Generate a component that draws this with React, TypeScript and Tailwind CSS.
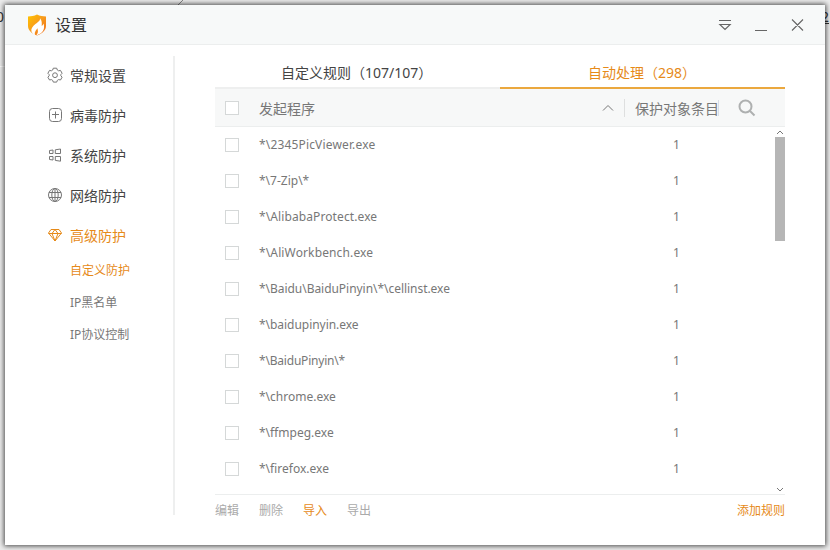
import React from 'react';

const rules = [
  { path: '*\\2345PicViewer.exe', tracking: 'tracking-[0.16px]' },
  { path: '*\\7-Zip\\*', tracking: 'tracking-[0px]' },
  { path: '*\\AlibabaProtect.exe', tracking: 'tracking-[0.1px]' },
  { path: '*\\AliWorkbench.exe', tracking: 'tracking-[0.13px]' },
  { path: '*\\Baidu\\BaiduPinyin\\*\\cellinst.exe', tracking: 'tracking-[-0.04px]' },
  { path: '*\\baidupinyin.exe', tracking: 'tracking-[-0.04px]' },
  { path: '*\\BaiduPinyin\\*', tracking: 'tracking-[-0.2px]' },
  { path: '*\\chrome.exe', tracking: 'tracking-[0px]' },
  { path: '*\\ffmpeg.exe', tracking: 'tracking-[0px]' },
  { path: '*\\firefox.exe', tracking: 'tracking-[0px]' },
];

function Logo() {
  return (
    <svg className="h-[22px] w-5" viewBox="0 0 20 22">
      <defs>
        <linearGradient id="shield" x1="0" y1="0" x2="1" y2="1">
          <stop offset="0" stopColor="#ffc400" />
          <stop offset="0.5" stopColor="#f79a1d" />
          <stop offset="1" stopColor="#ee6c1c" />
        </linearGradient>
      </defs>
      <path d="M10 .6C12.800 2 16 2.500 19 2.500V12c0 4-3.500 7.500-9 9.500C4.500 19.500 1 16 1 12V2.500C4 2.500 7.200 2 10 .6Z" fill="url(#shield)" />
      <path d="M13 4.200C13.300 7.500 9.500 8.600 6.500 11.700c-2.400 2.500-3 5.200-1 7.500.8.900 1.700 1.500 2.700 2-1.200-3 .8-5 2.300-7 .2 1.800.7 2.700.3 4.200-.3 1.100-.8 2-1.600 3 3.700-1.200 7-3.200 7.700-6.900.3-1.900.2-3.700-.5-5-.1 1.100-.8 2-1.700 2.500C14.800 9.300 15.200 6.700 13 4.200Z" fill="#fff" />
    </svg>
  );
}

function Gear() {
  return (
    <svg className="size-4" viewBox="0 0 16 16" fill="none" stroke="currentColor" strokeWidth="1">
      <path d="M6.300 1.200h3.400l.6 1.800 1.300.8 1.900-.4 1.600 2.900L13.800 7.700v1l1.300 1.500-1.600 2.800-1.900-.4-1.300.8-.6 1.700H6.300l-.6-1.700-1.300-.8-1.900.4-1.600-2.800 1.300-1.500v-1L.9 6.300l1.600-2.900 1.900.4L5.700 3Z" strokeLinejoin="round" />
      <circle cx="8" cy="8.200" r="2.400" />
    </svg>
  );
}

function PlusBox() {
  return (
    <svg className="size-4" viewBox="0 0 16 16" fill="none" stroke="currentColor" strokeWidth="1">
      <rect x="2.500" y="1.500" width="12" height="13" rx="3" />
      <path d="M8.500 4.500v7M5 7.500h7" />
    </svg>
  );
}

function WindowsMark() {
  return (
    <svg className="size-4" viewBox="0 0 16 16" fill="none" stroke="currentColor" strokeWidth="1">
      <path d="M2.500 3.500l3.500-.5v3.500h-3.500ZM8.300 2.800l5.200-.8v4.500H8.300ZM2.500 9.500h3.500v3.500l-3.500-.5ZM8.300 9.500h5.200v4.700l-5.200-.8Z" />
    </svg>
  );
}

function Globe() {
  return (
    <svg className="size-4" viewBox="0 0 16 16" fill="none" stroke="currentColor" strokeWidth="1">
      <circle cx="8" cy="8" r="6.500" />
      <ellipse cx="8" cy="8" rx="3.200" ry="6.500" />
      <path d="M8 1.500v13M2 5.500h12M2 10.500h12" />
    </svg>
  );
}

function Diamond() {
  return (
    <svg className="size-4" viewBox="0 0 16 16" fill="none" stroke="currentColor" strokeWidth="1" strokeLinejoin="round">
      <path d="M4 2.500h8L14.500 6 8 14 1.500 6ZM1.500 6.500h13M5 6.500l3 7.500 3-7.500M5 6.500l3-4 3 4" />
    </svg>
  );
}

const nav = [
  { label: '常规设置', icon: <Gear /> },
  { label: '病毒防护', icon: <PlusBox /> },
  { label: '系统防护', icon: <WindowsMark /> },
  { label: '网络防护', icon: <Globe /> },
];

function Checkbox() {
  return <span className="ml-2.5 size-3.5 shrink-0 border border-[#d5d8d8] bg-white" />;
}

export default function App() {
  return (
    <div className="relative h-[550px] w-[830px] overflow-hidden bg-[#ececec] p-[5px] font-['Noto_Sans','Noto_Sans_CJK_SC',sans-serif] text-[#444]">
      <span className="absolute -left-[4px] top-[6px] text-[14px] text-[#333]">0</span>
      <span className="absolute left-[821px] top-[6px] text-[14px] text-[#333] underline">2</span>
      <svg className="absolute left-[176px] top-0 h-[5px] w-2" viewBox="0 0 8 5" fill="none" stroke="#888"><path d="M2 5 7 0" /></svg>
      <span className="absolute left-0 top-[66px] h-px w-[5px] bg-white" />

      <div className="relative flex h-[540px] w-[820px] flex-col bg-white shadow-[0_0_5px_1px_rgba(0,0,0,0.7)]">
        <header className="flex h-10 shrink-0 items-center border-b border-[#eceeee] bg-[#f7f9f9] pl-[22px] pr-[21px]">
          <Logo />
          <h1 className="ml-2 mt-px flex-1 text-[16px] leading-6 text-[#333]">设置</h1>
          <svg className="h-4 w-[88px] text-[#666]" viewBox="0 0 88 16" fill="none" stroke="currentColor" strokeWidth="1.100">
            <path d="M3 3.500h12M3.800 7.500h10.400L9 12.500ZM39 13.500h12M76 2.500l11 11M87 2.500l-11 11" />
          </svg>
        </header>

        <div className="flex min-h-0 flex-1">
          <aside className="mb-[30px] mt-[11px] w-[170px] shrink-0 border-r-2 border-[#eeefef] pl-[42px]">
            <nav className="-mt-px text-[14px]">
              {nav.map((item) => (
                <div key={item.label} className="flex h-10 items-center gap-[7px] text-[#444]">
                  <span className="text-[#777]">{item.icon}</span>{item.label}
                </div>
              ))}
              <div className="flex h-10 items-center gap-[7px] text-[#e68a19]"><Diamond />高级防护</div>
            </nav>
            <div className="pl-[23px] text-[12px] leading-8 text-[#777]">
              <div className="text-[#e68a19]">自定义防护</div>
              <div>IP黑名单</div>
              <div>IP协议控制</div>
            </div>
          </aside>

          <main className="ml-10 mt-[11px] flex w-[570px] flex-col">
            <div className="flex h-[33px] text-[14px] leading-[34px]">
              <div className="w-[285px] border-b-2 border-[#eeefef] pl-[66px] text-[#444]">自定义规则（107/107）</div>
              <div className="w-[285px] border-b-2 border-[#eba83e] pl-[88px] text-[#e68a19]">自动处理（298）</div>
            </div>
            <div className="flex h-[38px] shrink-0 items-center border-b border-[#eceeee] bg-[#f7f8f8] text-[14px] text-[#777]">
              <Checkbox />
              <span className="ml-5 mt-px flex-1">发起程序</span>
              <svg className="mr-[10px] h-3 w-3" viewBox="0 0 12 12" fill="none" stroke="#777"><path d="m1 8.500 5-5 5 5" /></svg>
              <span className="h-[18px] w-px bg-[#dedfdf]" />
              <span className="ml-[10px] mt-px w-[84px]">保护对象条目</span>
              <span className="-ml-px h-4 w-px bg-[#d8dce6]" />
              <svg className="ml-[19px] mr-[29px] size-[18px]" viewBox="0 0 18 18" fill="none" stroke="#aeb0b0" strokeWidth="2"><circle cx="7.500" cy="7.500" r="6" /><path d="m12 12 4.500 4.500" /></svg>
            </div>
            <div className="flex h-[368px] shrink-0 border-b border-[#eceeee]">
              <div className="flex-1">
                {rules.map((rule) => (
                  <div key={rule.path} className="flex h-9 items-center text-[12px] text-[#777]">
                    <Checkbox />
                    <span className={`ml-5 w-[410px] ${rule.tracking}`}>{rule.path}</span>
                    <span className="ml-1">1</span>
                  </div>
                ))}
              </div>
              <div className="flex w-2.5 flex-col items-center justify-between pb-0.5 pt-[3px]">
                <svg className="h-[5px] w-2" viewBox="0 0 8 5" fill="none" stroke="#777"><path d="m1 4 3-3 3 3" /></svg>
                <span className="mb-auto mt-[2px] h-[104px] w-2.5 bg-[#b6b6b6]" />
                <svg className="h-[5px] w-2" viewBox="0 0 8 5" fill="none" stroke="#777"><path d="m1 1 3 3 3-3" /></svg>
              </div>
            </div>
            <footer className="flex h-[31px] items-center gap-5 text-[12px] text-[#aaa]">
              <span>编辑</span><span>删除</span><span className="text-[#e68a19]">导入</span><span>导出</span>
              <span className="ml-auto text-[#e68a19]">添加规则</span>
            </footer>
          </main>
        </div>
      </div>
    </div>
  );
}
